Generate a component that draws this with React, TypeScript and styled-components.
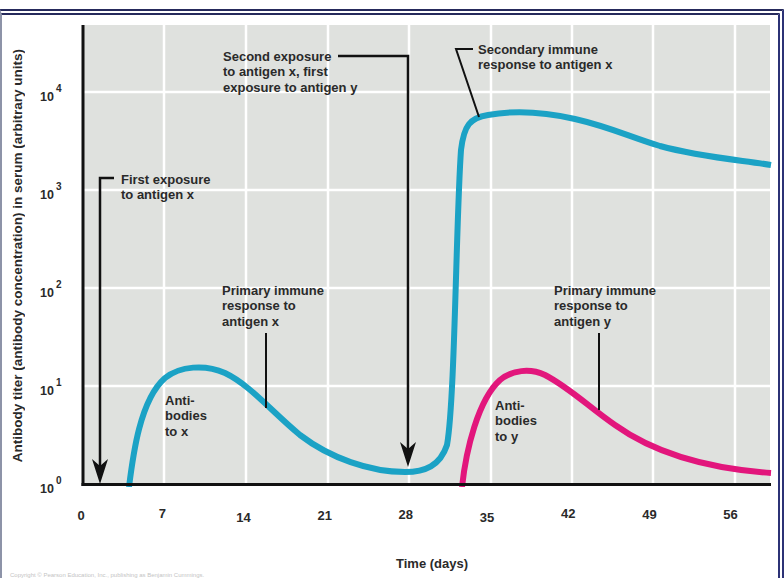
import React from 'react'
import styled, { createGlobalStyle } from 'styled-components'

const GlobalStyle = createGlobalStyle`
  html, body {
    margin: 0;
    padding: 0;
    background: #fff;
  }
  body {
    font-family: "Liberation Sans", Arial, sans-serif;
    overflow: hidden;
  }
`

const BLUE = '#1ba2c5'
const PINK = '#e2167c'
const INK = '#2a2a2a'

const Page = styled.div`
  width: 784px;
  height: 578px;
  padding-top: 9px;
  box-sizing: border-box;
  overflow: hidden;
`

const Frame = styled.div`
  height: 100%;
  box-sizing: border-box;
  border-top: 6px double #262a5c;
  border-right: 6px double #2c3276;
  border-left: 2px solid #8d93a8;
  display: flex;
  flex-direction: column;
`

const ChartRow = styled.div`
  display: flex;
  padding-top: 9px;
  height: 463px;
`

const YTitleCell = styled.div`
  width: 30px;
  height: 463px;
  display: flex;
  align-items: center;
  justify-content: center;
`

const YTitle = styled.div`
  writing-mode: vertical-rl;
  transform: rotate(180deg);
  font-size: 13.5px;
  font-weight: 700;
  color: ${INK};
  white-space: nowrap;
`

const YTickColumn = styled.div`
  width: 49px;
  height: 463px;
  display: grid;
  grid-template-rows: repeat(5, 98px);
  align-content: start;
  padding-top: 65px;
  box-sizing: border-box;
`

const YTick = styled.div`
  display: flex;
  align-items: flex-start;
  padding-left: 8px;
  height: 98px;
  font-size: 12.5px;
  font-weight: 700;
  color: ${INK};
  line-height: 16px;
`

const Exponent = styled.span`
  font-size: 10px;
  line-height: 10px;
  margin-left: 2px;
  margin-top: -5px;
`

const Plot = styled.svg`
  display: block;
  flex: none;
`

const XTickRow = styled.div`
  display: grid;
  grid-template-columns: repeat(9, 81.2px);
  padding-left: 40.5px;
  margin-top: 21px;
`

const XTick = styled.div<{ $shift: number }>`
  text-align: center;
  font-size: 13px;
  font-weight: 700;
  line-height: 16px;
  color: ${INK};
  transform: translate(-2px, ${({ $shift }) => $shift}px);
`

const XTitle = styled.div`
  margin-top: 32px;
  padding-left: 394px;
  font-size: 13px;
  font-weight: 700;
  line-height: 16px;
  color: ${INK};
`

const Caption = styled.div`
  margin-top: 0;
  padding-left: 8px;
  font-size: 6px;
  line-height: 7px;
  color: #c4c4c4;
  white-space: nowrap;
`

const CalloutText = styled.text`
  font-family: "Liberation Sans", Arial, sans-serif;
  font-size: 13px;
  font-weight: 700;
  fill: ${INK};
`

const Curve = styled.path<{ $color: string }>`
  fill: none;
  stroke: ${({ $color }) => $color};
  stroke-width: 6;
  stroke-linecap: butt;
  stroke-linejoin: round;
`

const Leader = styled.polyline<{ $width?: number }>`
  fill: none;
  stroke: #111;
  stroke-width: ${({ $width }) => $width ?? 2};
`

const GridLine = styled.line`
  stroke: #fff;
  stroke-width: 2.5;
`

const AxisLine = styled.line`
  stroke: #111;
  stroke-width: 3;
`

const Callout = ({ x, y, lines }: { x: number; y: number; lines: string[] }) => (
  <CalloutText>
    {lines.map((line, i) => (
      <tspan key={i} x={x} y={y + 4.5 + i * 15.5}>
        {line}
      </tspan>
    ))}
  </CalloutText>
)

// arrowhead with a notched back, tip pointing down
const ArrowHead = ({ x, y }: { x: number; y: number }) => (
  <polygon
    points={`${x},${y} ${x - 8},${y - 25} ${x},${y - 18} ${x + 8},${y - 25}`}
    fill="#111"
  />
)

const dayLines = [164, 246, 328, 409, 491, 572, 653, 735]
const decadeLines = [92, 190, 288, 386]

const xTicks = [
  { label: '0', shift: 0 },
  { label: '7', shift: -2 },
  { label: '14', shift: 2 },
  { label: '21', shift: 0 },
  { label: '28', shift: -1 },
  { label: '35', shift: 2 },
  { label: '42', shift: -2 },
  { label: '49', shift: -1 },
  { label: '56', shift: -1 },
]

const blueCurve =
  'M 129 487 C 133 455, 140 400, 165 378 C 180 366, 205 364, 225 373 ' +
  'C 250 385, 270 410, 300 435 C 330 458, 370 472, 405 472 ' +
  'C 425 472, 440 466, 447 445 C 455 400, 456 220, 461 150 ' +
  'C 464 125, 470 118, 488 115 C 510 111, 540 111, 575 119 ' +
  'C 610 127, 630 137, 660 146 C 700 157, 740 160, 771 165'

const pinkCurve =
  'M 462 487 C 466 450, 478 400, 500 380 C 512 370, 530 368, 545 375 ' +
  'C 570 388, 590 408, 615 425 C 650 450, 700 468, 771 473'

const App = () => {
  return (
    <>
      <GlobalStyle />
      <Page>
        <Frame>
          <ChartRow>
            <YTitleCell>
              <YTitle>
                Antibody titer (antibody concentration) in serum (arbitrary units)
              </YTitle>
            </YTitleCell>
            <YTickColumn>
              {[4, 3, 2, 1, 0].map((n) => (
                <YTick key={n}>
                  10<Exponent>{n}</Exponent>
                </YTick>
              ))}
            </YTickColumn>
            <Plot width={691} height={463} viewBox="81 24 691 463">
              <rect x={84} y={25} width={686} height={459} fill="#dfe1de" />
              {dayLines.map((x) => (
                <GridLine key={x} x1={x} y1={25} x2={x} y2={484} />
              ))}
              {decadeLines.map((y) => (
                <GridLine key={y} x1={84} y1={y} x2={770} y2={y} />
              ))}

              <Curve $color={BLUE} d={blueCurve} />
              <Curve $color={PINK} d={pinkCurve} />

              <AxisLine x1={83} y1={25} x2={83} y2={486} />
              <AxisLine x1={81.5} y1={484.5} x2={771} y2={484.5} />

              {/* first exposure */}
              <Leader $width={2.5} points="114,178 100,178 100,466" />
              <ArrowHead x={100} y={484} />
              <Callout x={121} y={179} lines={['First exposure', 'to antigen x']} />

              {/* second exposure */}
              <Leader $width={2.5} points="338,56 408,56 408,450" />
              <ArrowHead x={408} y={467} />
              <Callout
                x={223}
                y={56}
                lines={['Second exposure', 'to antigen x, first', 'exposure to antigen y']}
              />

              {/* secondary response */}
              <Leader points="473,49 456,49 479,117" />
              <Callout
                x={478}
                y={49}
                lines={['Secondary immune', 'response to antigen x']}
              />

              {/* primary response x */}
              <Leader points="266,333 266,408" />
              <Callout
                x={222}
                y={290}
                lines={['Primary immune', 'response to', 'antigen x']}
              />
              <Callout x={165} y={400} lines={['Anti-', 'bodies', 'to x']} />

              {/* primary response y */}
              <Leader points="599,333 599,410" />
              <Callout
                x={554}
                y={290}
                lines={['Primary immune', 'response to', 'antigen y']}
              />
              <Callout x={495} y={405} lines={['Anti-', 'bodies', 'to y']} />
            </Plot>
          </ChartRow>
          <XTickRow>
            {xTicks.map((t) => (
              <XTick key={t.label} $shift={t.shift}>
                {t.label}
              </XTick>
            ))}
          </XTickRow>
          <XTitle>Time (days)</XTitle>
          <Caption>
            Copyright © Pearson Education, Inc., publishing as Benjamin Cummings.
          </Caption>
        </Frame>
      </Page>
    </>
  )
}

export default App
